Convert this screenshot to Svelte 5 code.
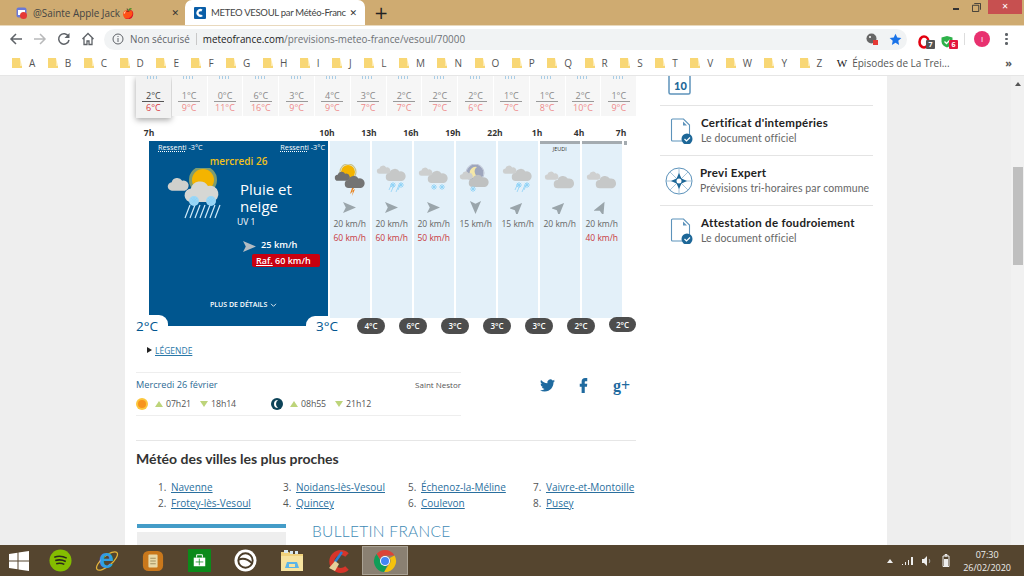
<script>
  const marks = ['A','B','C','D','E','F','G','H','I','J','L','M','N','O','P','Q','R','S','T','V','W','Y','Z'];
  const days = [['2°C','6°C'],['1°C','9°C'],['0°C','11°C'],['6°C','16°C'],['3°C','9°C'],['4°C','9°C'],['3°C','7°C'],['2°C','7°C'],['2°C','7°C'],['2°C','6°C'],['1°C','7°C'],['1°C','8°C'],['2°C','10°C'],['1°C','9°C']];
  const hours = ['10h','13h','16h','19h','22h','1h','4h','7h'];
  const cols = [
    { kind:'storm', rot:0, speed:'20 km/h', gust:'60 km/h', temp:'4°C' },
    { kind:'sleet', rot:0, speed:'20 km/h', gust:'60 km/h', temp:'6°C' },
    { kind:'snow', rot:0, speed:'20 km/h', gust:'50 km/h', temp:'3°C' },
    { kind:'night', rot:90, speed:'15 km/h', gust:'', temp:'3°C' },
    { kind:'sleet', rot:-45, speed:'15 km/h', gust:'', temp:'3°C' },
    { kind:'cloud', rot:-45, speed:'20 km/h', gust:'', temp:'2°C', bar:true, day:'JEUDI' },
    { kind:'cloud', rot:-62, speed:'20 km/h', gust:'40 km/h', temp:'2°C', bar:true }
  ];
  const cloudPath = 'M4 13a4 4 0 0 1-.5-8 5.5 5.5 0 0 1 10-1.5 4.5 4.5 0 0 1 2.5 9.5z';
  const cities = [['1.','Navenne'],['2.','Frotey-lès-Vesoul'],['3.','Noidans-lès-Vesoul'],['4.','Quincey'],['5.','Échenoz-la-Méline'],['6.','Coulevon'],['7.','Vaivre-et-Montoille'],['8.','Pusey']];
</script>

{#snippet cloud(x, y, s, fill)}
  <path d={cloudPath} transform="translate({x} {y}) scale({s})" fill={fill} />
{/snippet}

{#snippet flake(x, y, r)}
  <g stroke="#8ed2f6" stroke-width="0.9" transform="translate({x} {y})">
    <path d="M{-r} 0H{r}M0 {-r}V{r}M{-r*0.7} {-r*0.7}L{r*0.7} {r*0.7}M{-r*0.7} {r*0.7}L{r*0.7} {-r*0.7}" />
  </g>
{/snippet}

{#snippet weather(kind)}
  <svg class="wx" viewBox="0 0 40 32" width="40" height="32">
    {#if kind === 'storm'}
      <circle cx="18" cy="8" r="7" fill="#f4b400" />
      <circle cx="18" cy="8" r="8" fill="none" stroke="#c9c28a" stroke-width="1.2" />
      {@render cloud(5, 7, 0.75, '#6f6f6f')}
      {@render cloud(15, 11, 1, '#747474')}
      <path d="M22 24l-2 6 3-3-1 5 3-7-3 2 2-3z" fill="#e8811a" />
    {:else if kind === 'sleet'}
      {@render cloud(5, 1, 0.68, '#cdcfcf')}
      {@render cloud(14, 4, 1, '#c6c8c8')}
      <path d="M17 26l3-7M19 28l3-7M24 28l3-7M26 26l3-7" stroke="#8ed2f6" stroke-width="0.8" />
      {@render flake(21, 21, 3)}
      {@render flake(29, 21, 3)}
    {:else if kind === 'snow'}
      {@render cloud(5, 3, 0.68, '#cdcfcf')}
      {@render cloud(14, 6, 1, '#c6c8c8')}
      {@render flake(20, 23, 3)}
      {@render flake(28, 23, 3)}
    {:else if kind === 'night'}
      <circle cx="19" cy="9" r="8.5" fill="#9ea6bd" />
      <circle cx="19" cy="9" r="9" fill="none" stroke="#bfc5d4" stroke-width="1" />
      <path d="M21 3a6 6 0 1 0 3 10 5.5 5.5 0 0 1-3-10z" fill="#f4e7a8" />
      {@render cloud(4, 7, 0.65, '#cdcfcf')}
      {@render cloud(13, 10, 1, '#bfc1c1')}
      {@render flake(17, 25, 3)}
    {:else}
      {@render cloud(5, 7, 0.68, '#cfd0d0')}
      {@render cloud(14, 11, 1.02, '#c6c8c8')}
    {/if}
  </svg>
{/snippet}

{#snippet plane(rot, color)}
  <svg class="plane" viewBox="0 0 16 14" width="15" height="13">
    <path d="M1 1l14 6-14 6 3-6z" fill={color} transform="rotate({rot} 8 7)" />
  </svg>
{/snippet}

{#snippet folder()}
  <svg class="folder" viewBox="0 0 10 10" width="10" height="10">
    <path d="M0 0h8v8h2v2H0z" fill="#f8d775" /><path d="M8 0v8h2z" fill="#fdeab0" />
  </svg>
{/snippet}

{#snippet docCheck()}
  <svg class="side-ic" viewBox="0 0 24 26" width="24" height="26">
    <path d="M2.5 1h11l6 6v16h-17a1 1 0 0 1-1-1V2a1 1 0 0 1 1-1z" fill="none" stroke="#5d93bb" stroke-width="1.1" />
    <path d="M13 3.500l4 4h-4z" fill="#5d93bb" />
    <circle cx="17" cy="21" r="5.500" fill="#1d6798" />
    <path d="M14.500 21l2 2 3.500-3.500" fill="none" stroke="#fff" stroke-width="1.200" />
  </svg>
{/snippet}

<div class="screen">
  <header class="tabstrip">
    <div class="tab">
      <svg viewBox="0 0 12 12" width="12" height="12"><rect x="0.500" y="0.500" width="10" height="10" rx="2" fill="#6a78d6" /><rect x="2" y="3" width="7" height="5" fill="#fff" /><circle cx="7.500" cy="8.500" r="3.500" fill="#e53935" /></svg>
      <span class="tab-title">@Sainte Apple Jack 🍎</span>
      <span class="x">✕</span>
    </div>
    <div class="tab active">
      <svg viewBox="0 0 12 12" width="12" height="12"><rect width="12" height="12" rx="1" fill="#0a5ea8" /><path d="M8.500 2.500a4 4 0 1 0 .5 6.500L7 7.500a1.700 1.700 0 1 1 .3-3z" fill="#fff" /></svg>
      <span class="tab-title clip">METEO VESOUL par Météo-Franc</span>
      <span class="x">✕</span>
    </div>
    <span class="plus">+</span>
    <div class="winbtns">
      <svg viewBox="0 0 8 8" width="8" height="8" class="win-min"><rect y="5" width="6" height="2" fill="#333" /></svg>
      <svg viewBox="0 0 10 10" width="9" height="9" class="win-max"><path d="M2.500.5h7v7M.5 2.500h7v7h-7z" fill="none" stroke="#333" /></svg>
      <span class="win-close">✕</span>
    </div>
  </header>

  <nav class="toolbar">
    <svg class="tb" viewBox="0 0 14 14" width="14" height="14"><path d="M13 7H2M7 2L2 7l5 5" fill="none" stroke="#5f6368" stroke-width="1.500" /></svg>
    <svg class="tb" viewBox="0 0 14 14" width="14" height="14"><path d="M1 7h11M7 2l5 5-5 5" fill="none" stroke="#b8b9ba" stroke-width="1.500" /></svg>
    <svg class="tb" viewBox="0 0 14 14" width="14" height="14"><path d="M11.500 4.500A5.200 5.200 0 1 0 12 8" fill="none" stroke="#5f6368" stroke-width="1.500" /><path d="M12.500 1v5h-5z" fill="#5f6368" /></svg>
    <svg class="tb" viewBox="0 0 14 14" width="14" height="14"><path d="M1.500 7L7 1.500 12.500 7M3 6v6.500h3V9h2v3.500h3V6" fill="none" stroke="#5f6368" stroke-width="1.300" /></svg>
    <div class="urlbar">
      <svg viewBox="0 0 12 12" width="12" height="12"><circle cx="6" cy="6" r="5" fill="none" stroke="#5f6368" /><path d="M6 5v4M6 3v1" stroke="#5f6368" /></svg>
      <span class="insecure">Non sécurisé</span>
      <span class="url"><b>meteofrance.com</b>/previsions-meteo-france/vesoul/70000</span>
      <svg class="ext-a" viewBox="0 0 12 12" width="12" height="12"><circle cx="5.500" cy="5.500" r="5" fill="#666" /><circle cx="4" cy="4" r="1" fill="#fff" /><rect x="7" y="7" width="5" height="5" fill="#e53935" /></svg>
      <svg class="star" viewBox="0 0 14 14" width="13" height="13"><path d="M7 .8l1.900 4.100 4.400.5-3.300 3 .9 4.400L7 10.600l-3.900 2.200.9-4.400-3.300-3 4.400-.5z" fill="#1a73e8" /></svg>
    </div>
    <div class="ext">
      <svg viewBox="0 0 14 14" width="14" height="14"><ellipse cx="6" cy="7" rx="4.500" ry="5.500" fill="none" stroke="#e3000f" stroke-width="2.600" /></svg>
      <span class="badge grey">7</span>
    </div>
    <div class="ext second">
      <svg viewBox="0 0 14 14" width="14" height="14"><path d="M6 1l5.500 1.500v4c0 3-2.500 5-5.500 6-3-1-5.500-3-5.500-6v-4z" fill="#2eb24a" /><path d="M3.500 6.500l2 2 3.500-3.500" fill="none" stroke="#fff" stroke-width="1.300" /></svg>
      <span class="badge red">6</span>
    </div>
    <span class="sep"></span>
    <span class="avatar">I</span>
    <span class="dots"><i></i><i></i><i></i></span>
  </nav>

  <div class="bookmarks">
    {#each marks as m}
      <span class="mark">{@render folder()}<span>{m}</span></span>
    {/each}
    <span class="mark wiki"><span class="w">W</span><span>Épisodes de La Trei...</span></span>
    <span class="more">»</span>
  </div>

  <div class="page">
    <main class="content">
      <section class="left">
        <div class="strip">
          {#each days as d, i}
            <div class="day" class:sel={i === 0}>
              <span class="rain"></span>
              <span class="lo">{d[0]}</span>
              <span class="hi">{d[1]}</span>
            </div>
          {/each}
        </div>

        <div class="hours">
          <span class="hour first">7h</span>
          {#each hours as h}<span class="hour">{h}</span>{/each}
        </div>

        <div class="forecast">
          <div class="panel">
            <div class="feel"><span><u>Ressenti</u> -3°C</span><span><u>Ressenti</u> -3°C</span></div>
            <div class="weekday">mercredi 26</div>
            <div class="now">
              <svg class="now-ic" viewBox="0 0 56 56" width="56" height="56">
                <circle cx="36" cy="12" r="14" fill="#7f9c6f" />
                <circle cx="36" cy="12" r="11" fill="#f4b400" />
                {@render cloud(1, 9, 1.05, '#cfd0cc')}
                {@render cloud(18, 12, 1.7, '#d6d7d4')}
                <path d="M18 50l5-13M23 50l5-13M28 50l5-13M33 50l5-13M38 50l5-13M43 50l5-13M48 50l5-13" stroke="#cfeaf9" stroke-width="1.200" />
                <circle cx="27" cy="33" r="5" fill="#9ad7f7" />
                <circle cx="44" cy="33" r="5" fill="#9ad7f7" />
                {@render flake(27, 33, 4)}
                {@render flake(44, 33, 4)}
              </svg>
              <div class="cond">
                <div class="cond-name">Pluie et<br />neige</div>
                <div class="uv">UV 1</div>
              </div>
            </div>
            <div class="wind">
              {@render plane(0, '#b4bcc2')}
              <span>25 km/h</span>
            </div>
            <div class="gustbox"><u>Raf.</u> 60 km/h</div>
            <div class="details">PLUS DE DÉTAILS
              <svg viewBox="0 0 8 6" width="7" height="5"><path d="M1 1l3 3 3-3" fill="none" stroke="#fff" stroke-width="1" /></svg>
            </div>
            <span class="tab-temp left-temp">2°C</span>
            <span class="tab-temp right-temp">3°C</span>
          </div>

          {#each cols as c, i}
            <div class="col">
              {#if c.bar}<span class="topbar"></span>{/if}
              <span class="jeudi">{c.day ?? ''}</span>
              {@render weather(c.kind)}
              {@render plane(c.rot, '#9aa5ab')}
              <span class="speed">{c.speed}</span>
              <span class="gust">{c.gust}</span>
              <span class="pill" class:last={i === cols.length - 1}>{c.temp}</span>
            </div>
          {/each}
          <span class="endbar"></span>
        </div>

        <a class="legend" href="#legende"><span class="tri"></span><span class="legend-text">LÉGENDE</span></a>

        <div class="ephem">
          <div class="eph-box">
            <div class="eph-top"><span class="date">Mercredi 26 février</span><span class="saint">Saint Nestor</span></div>
            <div class="eph-row">
              <svg viewBox="0 0 12 12" width="12" height="12"><circle cx="6" cy="6" r="6" fill="#fcc63c" /><circle cx="6" cy="6" r="4" fill="#f7941d" /></svg>
              <span class="up"></span><span class="t">07h21</span>
              <span class="down"></span><span class="t gap-b">18h14</span>
              <svg viewBox="0 0 12 12" width="12" height="12"><circle cx="6" cy="6" r="6" fill="#0d4358" /><path d="M7 2a4 4 0 0 0 0 8 5 5 0 0 1 0-8z" fill="#fff" /></svg>
              <span class="up"></span><span class="t">08h55</span>
              <span class="down"></span><span class="t">21h12</span>
            </div>
          </div>
          <div class="social">
            <svg viewBox="0 0 24 24" width="15" height="15"><path fill="#1f6a9f" d="M23.950 4.570a10 10 0 0 1-2.820.77 4.960 4.960 0 0 0 2.160-2.720c-.95.55-2 .95-3.120 1.180a4.920 4.920 0 0 0-8.380 4.480C7.690 8.100 4.070 6.130 1.640 3.160a4.820 4.820 0 0 0-.66 2.470c0 1.710.87 3.210 2.190 4.100a4.900 4.900 0 0 1-2.230-.61v.06a4.920 4.920 0 0 0 3.950 4.830 5 5 0 0 1-2.210.08 4.930 4.930 0 0 0 4.600 3.420A9.870 9.870 0 0 1 0 19.540a14 14 0 0 0 7.560 2.210c9.050 0 14-7.500 14-13.980 0-.21 0-.42-.02-.63A9.940 9.940 0 0 0 24 4.590z" /></svg>
            <svg viewBox="0 0 24 24" width="15" height="15"><path fill="#1f6a9f" d="M14.500 5H18V0h-3.500C11.200 0 9 2.200 9 5.500V9H6v5h3v10h5V14h3.500l.5-5h-4V6c0-.6.300-1 1-1z" /></svg>
            <span class="gplus">g+</span>
          </div>
        </div>

        <div class="nearby">
          <h2>Météo des villes les plus proches</h2>
          <ol class="cities">
            {#each cities as c}
              <li><span class="num">{c[0]}</span><a href="#ville">{c[1]}</a></li>
            {/each}
          </ol>
        </div>

        <div class="bottom">
          <div class="promo"><div class="promo-bar"></div><div class="promo-grey"></div></div>
          <h3>BULLETIN FRANCE</h3>
        </div>
      </section>

      <aside class="right">
        <div class="side-cal">
          <svg viewBox="0 0 24 20" width="24" height="20"><rect x="1" y="-4" width="21" height="22" rx="1.500" fill="none" stroke="#5d93bb" stroke-width="1.500" /></svg>
          <span class="cal-num">10</span>
        </div>
        <div class="side-item">
          {@render docCheck()}
          <div><div class="s-title">Certificat d'intempéries</div><div class="s-sub">Le document officiel</div></div>
        </div>
        <div class="side-item">
          <svg class="side-ic compass" viewBox="0 0 28 28" width="28" height="28">
            <circle cx="14" cy="14" r="13" fill="none" stroke="#5d93bb" stroke-width="1" />
            <path d="M14 1v26M1 14h26M5 5l18 18M23 5L5 23" stroke="#8fb6d2" stroke-width="0.800" />
            <path d="M14 6l2.500 5.500L22 14l-5.500 2.500L14 22l-2.500-5.500L6 14l5.500-2.500z" fill="#1d6798" />
            <circle cx="14" cy="14" r="2.500" fill="#fff" />
          </svg>
          <div><div class="s-title">Previ Expert</div><div class="s-sub">Prévisions tri-horaires par commune</div></div>
        </div>
        <div class="side-item">
          {@render docCheck()}
          <div><div class="s-title">Attestation de foudroiement</div><div class="s-sub">Le document officiel</div></div>
        </div>
      </aside>
    </main>
    <div class="scrollbar"><span class="sb-arrow"></span><span class="sb-thumb"></span></div>
  </div>

  <footer class="taskbar">
    <span class="start">
      <svg viewBox="0 0 20 20" width="20" height="20"><path d="M0 3l8.500-1.200V9.500H0zM9.500 1.600L20 0v9.500H9.500zM0 10.500h8.500v7.700L0 17zM9.500 10.500H20V20L9.500 18.400z" fill="#fff" /></svg>
    </span>
    <span class="tk"><svg viewBox="0 0 24 24" width="23" height="23"><circle cx="12" cy="12" r="11.500" fill="#84bd00" /><path d="M5.500 8.500c4-1.200 9-1 13 1M6.500 12c3.500-1 7.500-.8 11 1M7.500 15.300c3-.8 6-.6 8.500.8" fill="none" stroke="#2a2a1a" stroke-width="1.600" /></svg></span>
    <span class="tk ie"><svg viewBox="0 0 24 24" width="24" height="24"><ellipse cx="12" cy="12" rx="13" ry="5" transform="rotate(-40 12 12)" fill="none" stroke="#e5b53a" stroke-width="1.300" /></svg><span class="ie-e">e</span></span>
    <span class="tk"><svg viewBox="0 0 24 24" width="22" height="22"><rect x="1" y="1" width="22" height="22" rx="6" fill="#c9781c" /><rect x="7" y="5" width="10" height="14" rx="1" fill="#e8d9a8" /><path d="M9 9h6M9 12h6M9 15h6" stroke="#9a8a5a" /></svg></span>
    <span class="tk"><svg viewBox="0 0 24 24" width="23" height="23"><rect width="24" height="24" fill="#0b8a1a" /><path d="M6 9h12v9H6z" fill="#fff" /><path d="M9 9V6h6v3" fill="none" stroke="#fff" /><path d="M11.800 10v7M8 13.500h8" stroke="#0b8a1a" stroke-width="0.800" /></svg></span>
    <span class="tk"><svg viewBox="0 0 24 24" width="23" height="23"><circle cx="12" cy="12" r="11.500" fill="#fff" /><circle cx="12" cy="12" r="7.500" fill="none" stroke="#4a3c28" stroke-width="2" /><path d="M5 11c5-2 10 0 14 4" fill="none" stroke="#4a3c28" stroke-width="2" /></svg></span>
    <span class="tk"><svg viewBox="0 0 24 24" width="24" height="24"><path d="M1 3h8l2 2h12v17H1z" fill="#f1d27c" /><path d="M1 7h22v15H1z" fill="#f7e3a0" /><path d="M4 1h4v3H4zM10 2h3v3h-3zM15 2h3v3h-3z" fill="#d8e8ef" /><path d="M7 13h10l2 6H5z" fill="#5cb5e8" /><path d="M9 15h6v3H9z" fill="#f7e3a0" /></svg></span>
    <span class="tk"><svg viewBox="0 0 24 24" width="24" height="24"><path d="M20 6a9 9 0 1 0 0 13" fill="none" stroke="#d6352a" stroke-width="5" /><path d="M15 3L8 13" stroke="#2f7fd1" stroke-width="2.500" /><path d="M8 12l4 3-4 7-6-3z" fill="#e6cf9a" /></svg></span>
    <span class="tk active-app"><svg viewBox="0 0 24 24" width="24" height="24">
      <path d="M12 1a11 11 0 0 1 9.530 5.500H12a5.500 5.500 0 0 0-5.100 3.500L3.600 4.900A11 11 0 0 1 12 1z" fill="#db4437" />
      <path d="M21.530 6.500A11 11 0 0 1 11 23l4.700-7.200A5.500 5.500 0 0 0 16.800 9z" fill="#f4c20d" />
      <path d="M3.600 4.900l4.800 8.300A5.500 5.500 0 0 0 14 17l-3 6A11 11 0 0 1 3.600 4.900z" fill="#0f9d58" />
      <circle cx="12" cy="12" r="5" fill="#fff" /><circle cx="12" cy="12" r="4" fill="#4285f4" />
    </svg></span>
    <div class="tray">
      <svg viewBox="0 0 6 4" width="6" height="4"><path d="M0 4l3-4 3 4z" fill="#eee" /></svg>
      <svg class="sig" viewBox="0 0 12 9" width="12" height="9"><path d="M0 8h1v1H0zM3 6h1v3H3zM6 4h1v5H6zM9 1h2v8H9z" fill="#eee" /></svg>
      <svg viewBox="0 0 12 12" width="12" height="12"><path d="M1 4h2l3-3v10L3 8H1z" fill="#eee" /><path d="M8 4c1 1 1 3 0 4" fill="none" stroke="#aaa" /></svg>
      <svg viewBox="0 0 8 13" width="8" height="13"><path d="M1 2h6v10.500H1zM3 .5h2V2H3z" fill="none" stroke="#eee" /><rect x="2" y="5" width="4" height="7" fill="#eee" /></svg>
      <div class="clock"><span>07:30</span><span>26/02/2020</span></div>
    </div>
  </footer>
</div>

<style>
  :global(body) { margin: 0; }
  .screen { width: 1024px; height: 576px; display: flex; flex-direction: column; overflow: hidden; font-family: "Open Sans", sans-serif; background: #fff; }

  .tabstrip { height: 25px; flex: none; background: #cfab71; display: flex; align-items: flex-end; position: relative; border-bottom: 1px solid #e9d9bd; box-sizing: content-box; }
  .tab { width: 185px; height: 25px; box-sizing: border-box; display: flex; align-items: center; padding: 0 6px 0 16px; font-size: 9.900px; color: #444; gap: 5px; }
  .tab.active { width: 180px; background: #fff; border-radius: 7px 7px 0 0; padding: 0 8px 0 9px; }
  .tab-title { flex: 1; white-space: nowrap; min-width: 0; }
  .clip { font-family: Lato, sans-serif; font-size: 9.500px; letter-spacing: -.3px; }
  .x { font-size: 9px; color: #333; font-family: "DejaVu Sans", sans-serif; margin-left: 2px; }
  .plus { font-size: 17px; color: #222; margin: 0 0 3px 9px; line-height: 18px; font-family: "DejaVu Sans", sans-serif; }
  .winbtns { margin-left: auto; align-self: flex-start; display: flex; align-items: center; height: 14px; }
  .win-min { margin-right: 11px; }
  .win-max { margin-right: 7px; }
  .win-close { width: 34px; margin-right: 2px; height: 14px; background: #c75050; color: #fff; font-size: 8px; line-height: 14px; text-align: center; font-family: "DejaVu Sans", sans-serif; }

  .toolbar { height: 26px; flex: none; display: flex; align-items: center; background: #fff; padding-left: 9px; }
  .tb { margin-right: 10px; flex: none; }
  .urlbar { width: 803px; margin-left: -1px; height: 21px; background: #f1f3f4; border-radius: 11px; display: flex; align-items: center; padding: 0 5px 0 8px; box-sizing: border-box; flex: none; }
  .insecure { font-size: 9.900px; color: #5f6368; margin-left: 6px; padding-right: 6px; border-right: 1px solid #c8c8c8; line-height: 12px; }
  .url { font-size: 9.900px; color: #6d7175; margin-left: 6px; flex: 1; }
  .url b { font-weight: 400; color: #222; }
  .ext-a { margin-right: 11px; }
  .star { margin-right: 0; }
  .ext { position: relative; width: 14px; height: 14px; margin-left: 11px; flex: none; }
  .second { margin-left: 9px; }
  .badge { position: absolute; left: 8px; top: 8px; width: 9px; height: 9px; font-size: 7px; line-height: 9px; text-align: center; color: #fff; border-radius: 1px; font-weight: 700; }
  .grey { background: #555; }
  .red { background: #e3173e; }
  .sep { width: 1px; height: 12px; background: #ddd; margin-left: 9px; }
  .avatar { width: 16px; height: 16px; border-radius: 50%; background: #e8316f; color: #fff; font-size: 8px; line-height: 16px; text-align: center; margin-left: 9px; }
  .dots { display: flex; flex-direction: column; gap: 2px; margin-left: 15px; }
  .dots i { width: 2.500px; height: 2.500px; background: #5f6368; border-radius: 50%; }

  .bookmarks { height: 24px; flex: none; background: #fff; display: flex; align-items: center; padding: 0 0 2px 12px; font-size: 10px; color: #555; border-bottom: 1px solid #e6e6e6; box-sizing: border-box; }
  .mark { display: flex; align-items: center; gap: 7px; padding-right: 12.500px; }
  .folder { flex: none; }
  .wiki { gap: 5px; margin-left: 2px; white-space: nowrap; }
  .w { font-family: "Liberation Serif", serif; font-size: 11px; color: #111; }
  .more { margin-left: auto; margin-right: 12px; font-size: 11px; font-weight: 700; }

  .page { flex: 1; min-height: 0; display: flex; background: #eee; overflow: hidden; }
  .content { width: 762px; margin-left: 125px; background: #fff; display: grid; grid-template-columns: 500px 213px; gap: 24px; padding: 0 14px 0 11px; box-sizing: border-box; flex: none; height: 100%; overflow: hidden; }
  .scrollbar { margin-left: auto; width: 13px; background: #f1f1f1; position: relative; display: flex; flex-direction: column; align-items: center; }
  .sb-arrow { margin-top: 6px; width: 0; height: 0; border: 3px solid transparent; border-top: 0; border-bottom: 4px solid #555; }
  .sb-thumb { width: 10px; height: 98px; background: #bfbfbf; margin-top: 81px; }

  .left { min-width: 0; }
  .strip { display: flex; gap: 1px; height: 40px; }
  .day { width: 34.800px; flex: none; background: #f6f6f6; display: flex; flex-direction: column; align-items: center; font-size: 9px; line-height: 11px; position: relative; }
  .day.sel { height: 42px; box-shadow: 0 2px 6px rgba(0,0,0,.35); background: #f2f2f2; }
  .rain { height: 3px; width: 12px; margin-bottom: 11px; background: repeating-linear-gradient(90deg, #a9cde6 0 1px, transparent 1px 3px); }
  .lo { color: #8a8a8a; border-bottom: 1px solid #9a9a9a; width: 22px; text-align: center; }
  .hi { color: #ee8a8a; }
  .sel .lo { color: #444; border-color: #555; }
  .sel .hi { color: #d9363e; }

  .hours { display: flex; margin: 11px 0 0 -8px; height: 14px; }
  .hour { width: 42px; flex: none; text-align: center; font-size: 8.500px; font-weight: 700; color: #333; line-height: 12px; }
  .first { margin-right: 136px; }

  .forecast { margin: 0 0 0 13px; display: flex; gap: 1.500px; height: 185px; align-items: flex-start; position: relative; }
  .panel { width: 179px; height: 185px; background: #00568f; color: #fff; flex: none; position: relative; }
  .feel { display: flex; justify-content: space-between; font-size: 7.300px; padding: 0 3px 0 9px; line-height: 12px; }
  .feel u { text-decoration-style: dotted; }
  .weekday { text-align: center; color: #f2c21c; font-size: 10px; font-weight: 600; margin: 1px 0 0 0; line-height: 14px; }
  .now { display: flex; padding-left: 18px; gap: 17px; height: 58px; }
  .now-ic { flex: none; }
  .cond { padding-top: 13px; }
  .cond-name { font-size: 15px; line-height: 17px; }
  .uv { font-size: 8.500px; margin: 1px 0 0 -3px; line-height: 12px; }
  .wind { display: flex; align-items: center; gap: 4px; font-size: 9.200px; font-weight: 600; margin: 9px 0 0 93px; line-height: 13px; }
  .gustbox { margin: 1px 0 0 103px; width: 68px; height: 13px; background: #c8000f; border-radius: 2px; font-size: 9px; font-weight: 600; line-height: 13px; padding-left: 4px; box-sizing: border-box; }
  .details { margin: 33px 0 0 61px; font-size: 7px; font-weight: 600; display: flex; align-items: center; gap: 3px; line-height: 10px; }
  .tab-temp { position: absolute; background: #fff; color: #00568f; font-size: 13.500px; text-align: center; }
  .left-temp { left: -19px; top: 174px; width: 38px; height: 11px; border-radius: 0 9px 0 0; line-height: 22px; text-align: left; padding-left: 6px; box-sizing: border-box; }
  .right-temp { left: 157px; top: 175px; width: 42px; height: 18px; border-radius: 9px 9px 0 0; line-height: 20px; }

  .col { width: 40.500px; height: 177px; flex: none; background: #e3f0f9; position: relative; display: flex; flex-direction: column; align-items: center; }
  .topbar { position: absolute; left: 0; top: 0; right: 0; height: 3px; background: #a4abb0; }
  .jeudi { height: 23px; font-size: 5.500px; color: #333; padding-top: 5px; box-sizing: border-box; line-height: 6px; }
  .wx { flex: none; }
  .plane { margin-top: 5px; flex: none; }
  .speed { font-size: 8.500px; color: #666; margin-top: 3px; line-height: 14px; white-space: nowrap; }
  .gust { font-size: 8.500px; color: #c8383f; line-height: 14px; white-space: nowrap; }
  .pill { position: absolute; right: -15px; bottom: -16px; width: 28px; height: 16px; border-radius: 8px; background: #4d4d4d; color: #fff; font-size: 8px; font-weight: 600; text-align: center; line-height: 16px; z-index: 1; }
  .pill.last { right: -14px; bottom: -14px; height: 15px; width: 27px; line-height: 15px; }
  .endbar { width: 3px; height: 4px; background: #a4abb0; flex: none; }

  .legend { display: flex; align-items: center; margin: 18px 0 0 11px; gap: 3px; height: 12px; text-decoration: none; }
  .tri { width: 0; height: 0; border: 3px solid transparent; border-left: 5px solid #222; border-right: 0; }
  .legend-text { font-size: 8.500px; color: #2a78a8; text-decoration: underline; }

  .ephem { display: flex; margin-top: 16px; align-items: flex-start; height: 44px; }
  .eph-box { width: 325px; height: 42px; border-top: 1px solid #eee; border-bottom: 1px solid #eee; }
  .eph-top { display: flex; justify-content: space-between; padding-top: 6px; line-height: 12px; }
  .date { font-size: 9.200px; color: #2c6a94; }
  .saint { font-size: 8px; color: #555; }
  .eph-row { display: flex; align-items: center; font-size: 8.800px; letter-spacing: -.1px; color: #555; margin-top: 7px; line-height: 12px; }
  .up, .down { width: 0; height: 0; border-left: 4px solid transparent; border-right: 4px solid transparent; }
  .up { border-bottom: 6px solid #bdd47a; margin: 0 3px 0 7px; }
  .down { border-top: 6px solid #bdd47a; margin: 0 3px 0 9px; }
  .t { line-height: 12px; }
  .gap-b { margin-right: 35px; }
  .social { display: flex; margin: 6px 0 0 79px; align-items: center; gap: 21px; }
  .gplus { font-family: "Liberation Serif", serif; font-weight: 700; font-size: 16px; color: #1f6a9f; line-height: 15px; margin-left: 1px; }

  .nearby { border-top: 1px solid #e6e6e6; margin-top: 24px; }
  h2 { font-family: Lato, sans-serif; font-size: 14px; font-weight: 700; color: #333; margin: 0; padding-top: 9px; line-height: 17px; }
  .cities { list-style: none; margin: 12px 0 0 22px; padding: 0; display: grid; grid-template-columns: repeat(4, 125px); grid-template-rows: 16px 16px; grid-auto-flow: column; font-size: 10px; line-height: 16px; }
  .cities li { display: flex; gap: 5px; white-space: nowrap; }
  .num { color: #555; width: 8px; }
  .cities a { color: #2a6f9e; text-decoration: underline; }

  .bottom { display: flex; margin-top: 13px; }
  .promo { width: 149px; margin-left: 1px; flex: none; }
  .promo-bar { height: 4px; background: #449cc8; }
  .promo-grey { height: 20px; margin-top: 4px; background: #eee; }
  h3 { margin: -2px 0 0 26px; font-family: Lato, sans-serif; font-weight: 300; font-size: 15.500px; color: #3f8ab5; line-height: 18px; letter-spacing: .3px; }

  .right { min-width: 0; }
  .side-cal { height: 30px; border-bottom: 1px solid #e4e4e4; padding-left: 8px; position: relative; box-sizing: border-box; }
  .side-cal svg { display: block; }
  .cal-num { position: absolute; left: 14px; top: 3px; font-family: Lato, sans-serif; font-weight: 900; font-size: 11px; line-height: 14px; color: #1d6798; }
  .side-item { height: 50px; box-sizing: border-box; border-bottom: 1px solid #e4e4e4; display: flex; align-items: center; padding-left: 10px; font-family: Lato, sans-serif; line-height: 15px; }
  .side-item:last-child { border-bottom: 0; }
  .side-ic { flex: none; margin-right: 7px; }
  .compass { margin: 0 7px 0 -5px; }
  .s-title { font-size: 11.500px; font-weight: 700; color: #222; white-space: nowrap; letter-spacing: .3px; margin-top: -1px; }
  .s-sub { font-size: 10.500px; color: #666; white-space: nowrap; letter-spacing: .1px; margin-top: 1px; }

  .taskbar { height: 31px; flex: none; background: #55452f; display: flex; align-items: center; position: relative; }
  .start { width: 37px; display: flex; justify-content: center; }
  .tk { width: 46.400px; height: 29px; display: flex; align-items: center; justify-content: center; position: relative; flex: none; }
  .ie svg { position: absolute; }
  .ie-e { font-family: "Liberation Sans", sans-serif; font-weight: 700; font-size: 27px; color: #2f9fe4; line-height: 24px; position: relative; top: -2px; }
  .active-app { background: #8a8072; box-shadow: inset 0 0 0 1px #aaa294; }
  .tray { margin-left: auto; display: flex; align-items: center; gap: 9px; color: #eee; padding-right: 13px; }
  .sig { margin-right: -2px; }
  .clock { display: flex; flex-direction: column; align-items: center; font-size: 9px; line-height: 13px; margin-left: 4px; }
</style>
